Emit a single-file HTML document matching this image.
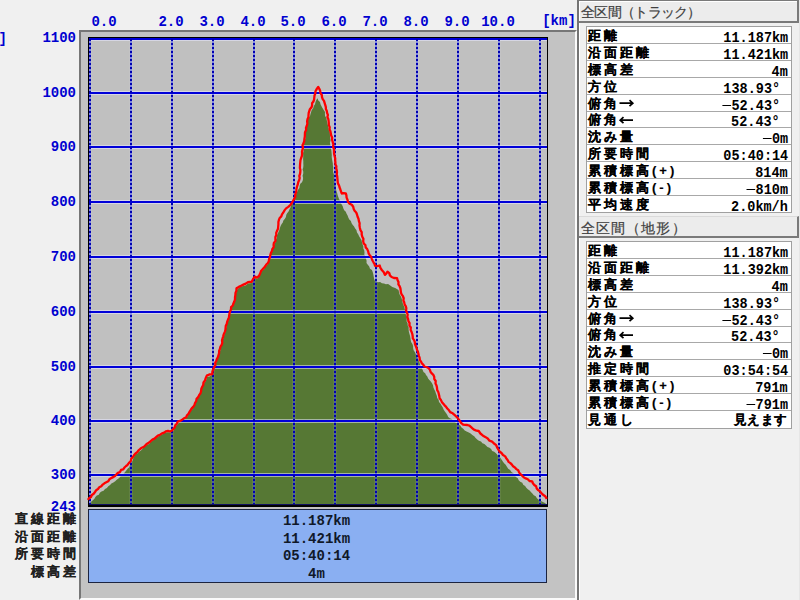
<!DOCTYPE html>
<html><head><meta charset="utf-8">
<style>
html,body{margin:0;padding:0;}
body{width:800px;height:600px;overflow:hidden;background:#f0f0f0;position:relative;font-family:"Liberation Mono",monospace;}
.abs{position:absolute;}
.yl{position:absolute;left:16px;width:60px;text-align:right;color:#0000d0;font:bold 14px/17px "Liberation Mono",monospace;}
.xl{position:absolute;top:14px;width:60px;text-align:center;color:#0000d0;font:bold 14px/17px "Liberation Mono",monospace;}
.panel{position:absolute;left:79px;top:30px;width:494px;height:566px;background:#c3c3c3;border-top:2px solid #767676;border-left:2px solid #767676;border-right:2px solid #fafafa;border-bottom:2px solid #fafafa;}
.info{position:absolute;left:88px;top:509px;width:457px;height:72px;background:#8aaff2;border:1px solid #1c2440;}
.iv{position:absolute;left:-1px;width:457px;text-align:center;color:#101828;font:bold 14px/17px "Liberation Mono",monospace;}
.ik{position:absolute;left:0;width:79px;text-align:right;color:#202020;font:bold 13px/17px "Liberation Sans",sans-serif;letter-spacing:3px;-webkit-text-stroke:0.15px #202020;}
.rline{position:absolute;left:577px;top:0;width:2px;height:600px;background:#747474;border-right:1px solid #fff;}
.hdr{position:absolute;left:579px;width:218px;height:19px;background:#ececec;border-top:1px solid #7a7a7a;border-right:2px solid #7a7a7a;border-bottom:2px solid #7a7a7a;box-shadow:inset 1px 1px 0 #fff;color:#404040;font:14px/20px "Liberation Sans",sans-serif;}
.hdr span{position:absolute;left:2px;top:1px;-webkit-text-stroke:0.2px #404040;white-space:nowrap;}
.tbl{position:absolute;left:586px;width:204px;background:#ffffff;border:1px solid #a0a0a0;}
.div{position:absolute;left:0;width:204px;height:1px;background:#a8a8a8;}
.k{position:absolute;left:1px;font:bold 13px/17px "Liberation Sans",sans-serif;color:#000;letter-spacing:3px;-webkit-text-stroke:0.15px #000;}
.v{position:absolute;right:3px;font:bold 14px/17px "Liberation Mono",monospace;color:#000;padding-top:3px;transform:scaleX(0.965);transform-origin:100% 50%;}
.ar{display:inline-block;width:15px;}
.v s{display:inline-block;width:8.4px;height:10px;position:relative;text-decoration:none;}
.v s::before{content:"";position:absolute;left:-1.5px;top:4.5px;width:9px;height:1.6px;background:#000;}
.v u{text-decoration:none;display:inline-block;font:bold 13px/17px "Liberation Sans",sans-serif;letter-spacing:1px;-webkit-text-stroke:0.15px #000;position:relative;top:-3px;}
.v i{font-style:normal;display:inline-block;width:17px;text-align:left;}
</style></head><body>
<div class="yl" style="left:-53px;top:31px;">[m]</div>
<div class="yl" style="top:30px">1100</div><div class="yl" style="top:85px">1000</div><div class="yl" style="top:139px">900</div><div class="yl" style="top:194px">800</div><div class="yl" style="top:249px">700</div><div class="yl" style="top:304px">600</div><div class="yl" style="top:359px">500</div><div class="yl" style="top:413px">400</div><div class="yl" style="top:467px">300</div><div class="yl" style="top:499px">243</div>
<div class="xl" style="left:74px;width:60px;">0.0</div>
<div class="xl" style="left:141px">2.0</div><div class="xl" style="left:182px">3.0</div><div class="xl" style="left:223px">4.0</div><div class="xl" style="left:263px">5.0</div><div class="xl" style="left:304px">6.0</div><div class="xl" style="left:345px">7.0</div><div class="xl" style="left:386px">8.0</div><div class="xl" style="left:427px">9.0</div><div class="xl" style="left:468px">10.0</div>
<div class="xl" style="left:529px;width:60px;top:13px">[km]</div>
<div class="panel"></div>
<svg class="abs" style="left:0;top:0" width="800" height="600" viewBox="0 0 800 600">
<rect x="88" y="37" width="460" height="470" fill="#000"/>
<rect x="89" y="38" width="458" height="467" fill="#c0c0c0"/>
<polygon points="87.9,503.8 90.0,503.0 91.3,501.5 92.9,500.2 94.4,498.8 95.4,497.0 96.8,495.5 98.8,494.7 99.8,492.8 101.5,491.5 103.6,490.7 105.0,489.0 106.9,487.9 108.3,486.3 110.1,485.1 111.4,483.4 113.4,482.4 115.2,481.3 116.7,479.7 118.5,478.5 120.1,477.1 121.3,475.1 123.4,474.0 124.9,472.3 126.3,470.5 127.6,468.8 129.3,467.2 130.0,465.0 131.2,463.1 132.4,461.1 133.2,458.6 134.3,456.3 135.5,454.5 137.4,453.4 138.8,451.8 140.7,450.7 142.2,449.3 143.5,447.3 145.3,446.0 147.1,444.7 149.3,443.9 150.7,442.1 152.6,440.8 154.1,439.2 156.0,438.0 157.9,436.7 159.9,435.5 162.0,434.5 164.0,433.3 166.0,432.4 168.0,432.2 170.0,432.4 172.3,432.2 173.6,430.5 174.5,428.5 175.3,426.4 177.1,425.0 178.2,423.4 180.2,422.1 182.0,420.6 184.1,419.4 185.8,417.8 187.4,416.5 188.3,414.6 189.2,412.7 190.2,410.9 192.0,409.6 193.3,408.0 193.6,405.8 195.3,404.1 195.9,402.0 196.7,399.8 197.8,397.9 199.2,396.1 200.3,394.1 200.3,391.8 201.6,390.0 201.8,387.8 203.2,386.1 203.8,383.7 205.3,381.7 206.4,379.4 207.0,377.0 209.7,376.5 211.8,374.9 212.3,372.6 213.6,370.5 213.8,368.1 214.7,365.9 215.5,364.0 216.4,362.0 216.5,359.9 217.1,357.9 218.5,356.1 218.6,353.9 219.8,352.1 220.4,350.1 220.5,347.9 221.1,345.8 221.8,343.7 222.5,341.6 223.0,339.5 223.6,337.3 224.2,335.3 225.1,333.2 225.3,331.0 225.8,328.9 226.6,326.9 226.6,324.7 227.2,322.6 228.4,320.7 228.5,318.5 229.0,316.5 229.0,314.3 229.9,312.3 230.9,310.3 231.1,308.1 232.5,306.3 233.3,304.3 233.5,302.1 234.8,300.3 235.1,298.2 235.7,296.1 235.8,293.9 236.5,291.9 236.8,289.9 238.8,287.9 241.1,286.6 243.6,286.1 246.0,285.2 248.0,283.5 250.0,283.3 252.1,283.0 253.2,280.3 254.8,277.6 257.1,278.9 258.5,276.7 260.0,274.6 261.1,272.2 262.6,270.6 264.2,269.2 265.0,267.1 266.8,265.7 267.7,263.9 268.1,261.9 268.8,260.0 270.2,258.3 270.5,256.2 271.0,254.2 271.9,252.2 272.8,250.3 272.9,248.1 273.7,246.1 274.4,244.1 275.5,242.2 275.7,240.1 276.8,238.2 276.8,236.0 277.6,234.0 278.5,232.1 279.3,230.2 279.9,228.1 280.6,226.1 281.5,224.2 282.8,222.5 283.4,220.4 284.9,218.8 285.9,216.9 286.3,214.7 287.3,212.9 288.7,211.3 289.5,209.3 290.5,207.5 291.0,205.4 291.8,203.4 292.8,201.6 294.1,199.8 294.5,197.7 295.5,195.7 296.4,193.8 297.2,191.8 298.1,189.8 299.4,188.1 299.6,185.8 300.3,183.7 302.0,182.2 302.9,180.0 303.1,177.9 302.6,175.8 303.2,173.8 303.3,171.7 302.6,169.6 303.2,167.5 303.4,165.4 303.3,163.4 303.3,161.3 303.1,159.2 303.2,157.1 303.2,155.0 303.1,152.9 303.7,150.9 303.5,148.8 304.1,146.7 303.6,144.6 304.8,142.6 304.8,140.5 305.4,138.4 305.6,136.3 305.9,134.3 305.9,132.1 305.6,130.0 306.6,128.0 306.3,125.8 306.7,123.8 307.4,121.8 308.0,119.8 308.7,117.8 310.0,116.0 310.5,113.9 311.1,111.9 311.8,109.9 313.2,108.2 313.8,106.1 315.0,104.3 315.5,102.1 316.3,100.1 317.5,98.3 318.3,100.4 320.0,102.0 320.5,104.3 321.5,106.3 322.6,108.2 323.7,110.1 325.0,111.9 324.9,114.0 325.1,116.1 326.4,117.9 326.7,119.9 327.2,121.9 327.5,124.0 328.1,126.0 328.5,128.0 328.7,130.0 329.7,132.0 329.9,134.1 330.0,136.2 330.3,138.3 330.6,140.4 329.9,142.6 330.2,144.7 331.2,146.7 331.0,148.8 331.4,150.8 331.6,152.9 331.8,155.0 331.7,157.1 332.0,159.2 332.4,161.3 332.8,163.3 332.9,165.4 333.3,167.5 333.1,169.6 333.1,171.7 333.7,173.7 334.2,175.8 334.3,177.9 334.3,180.0 334.6,182.2 334.9,184.3 335.7,186.4 335.8,188.6 336.4,190.7 337.1,192.8 337.6,194.9 338.3,196.9 339.0,198.9 340.1,200.7 340.6,202.7 341.7,204.5 342.7,206.3 343.3,208.3 344.2,210.2 345.8,211.7 346.6,213.7 347.6,215.5 348.3,217.6 349.3,219.4 350.9,221.0 351.5,223.0 352.6,224.8 354.1,226.4 355.0,228.3 356.4,230.1 357.0,232.4 358.2,234.2 359.1,236.3 360.3,238.2 361.5,240.0 361.9,242.1 362.5,244.2 363.3,246.2 363.3,248.4 364.2,250.3 364.5,252.5 364.3,254.7 365.4,256.6 366.0,258.7 366.6,260.7 366.5,263.0 367.8,264.8 369.2,266.5 370.0,268.7 371.9,270.0 372.7,272.1 373.3,274.3 373.7,276.6 374.1,278.8 375.0,281.1 377.9,282.3 380.1,282.1 381.9,283.3 384.0,283.5 385.9,284.2 388.1,284.1 389.9,285.2 392.3,287.0 395.2,287.9 398.5,289.9 399.0,292.1 399.5,294.3 400.8,296.2 401.6,298.2 402.2,300.4 402.6,302.6 403.2,304.7 404.3,306.7 404.7,308.8 405.1,310.8 405.6,312.9 405.9,315.0 406.7,317.0 406.7,319.2 406.6,321.4 407.6,323.3 407.7,325.5 408.7,327.4 408.6,329.6 408.9,331.7 409.4,333.8 410.0,335.8 410.4,337.9 410.7,340.0 411.1,342.1 412.4,343.9 413.1,345.9 413.1,348.1 413.6,350.2 414.8,352.0 415.8,354.0 416.4,356.2 417.7,358.0 418.5,360.1 419.4,362.1 419.9,364.3 421.0,366.2 421.9,368.2 422.7,370.1 423.5,371.9 425.2,373.2 426.0,375.1 427.3,376.6 428.1,378.5 429.4,380.0 430.8,381.5 432.0,383.2 433.0,385.2 433.4,387.5 434.3,389.5 435.3,391.5 436.0,393.7 436.8,395.8 437.2,398.0 438.6,399.8 439.0,402.1 440.5,403.7 441.5,405.6 442.8,407.4 443.6,409.4 444.7,411.3 446.0,413.0 447.2,414.8 448.2,416.9 449.8,418.2 451.7,419.1 453.2,420.6 454.7,422.1 456.7,423.1 458.5,424.3 460.2,425.6 461.5,427.4 463.2,428.8 464.7,430.4 466.6,431.6 468.8,432.4 470.6,433.6 472.3,435.0 474.2,436.2 475.6,437.9 477.2,439.4 478.9,440.7 481.0,441.4 482.4,443.2 484.4,444.1 486.0,445.4 487.5,447.0 489.5,447.7 491.1,449.0 492.2,450.9 494.2,451.8 495.7,453.1 497.2,454.5 498.5,456.4 500.4,457.7 501.5,459.6 502.8,461.5 504.1,463.2 505.7,464.8 506.9,466.8 508.2,468.7 510.1,470.1 511.5,471.9 513.3,473.3 514.7,475.1 515.9,477.1 517.8,478.2 518.7,480.3 520.2,481.8 522.3,482.7 523.2,484.8 525.1,485.9 526.3,487.7 527.8,489.2 529.6,490.4 530.9,492.1 532.4,493.6 533.8,495.2 535.7,496.3 536.9,498.2 538.7,499.7 540.8,500.8 542.8,502.1 545.0,503.1 546.8,504.8 547.0,505.0 88.0,505.0" fill="#567834"/>
<rect x="89" y="37" width="458" height="4" fill="#e8e8ff" opacity="0.55"/><rect x="89" y="91" width="458" height="4" fill="#e8e8ff" opacity="0.55"/><rect x="89" y="145" width="458" height="4" fill="#e8e8ff" opacity="0.55"/><rect x="89" y="200" width="458" height="4" fill="#e8e8ff" opacity="0.55"/><rect x="89" y="255" width="458" height="4" fill="#e8e8ff" opacity="0.55"/><rect x="89" y="310" width="458" height="4" fill="#e8e8ff" opacity="0.55"/><rect x="89" y="365" width="458" height="4" fill="#e8e8ff" opacity="0.55"/><rect x="89" y="419" width="458" height="4" fill="#e8e8ff" opacity="0.55"/><rect x="89" y="473" width="458" height="4" fill="#e8e8ff" opacity="0.55"/><rect x="88" y="38" width="4" height="467" fill="#e8e8ff" opacity="0.08"/><rect x="129" y="38" width="4" height="467" fill="#e8e8ff" opacity="0.08"/><rect x="170" y="38" width="4" height="467" fill="#e8e8ff" opacity="0.08"/><rect x="211" y="38" width="4" height="467" fill="#e8e8ff" opacity="0.08"/><rect x="252" y="38" width="4" height="467" fill="#e8e8ff" opacity="0.08"/><rect x="292" y="38" width="4" height="467" fill="#e8e8ff" opacity="0.08"/><rect x="333" y="38" width="4" height="467" fill="#e8e8ff" opacity="0.08"/><rect x="374" y="38" width="4" height="467" fill="#e8e8ff" opacity="0.08"/><rect x="415" y="38" width="4" height="467" fill="#e8e8ff" opacity="0.08"/><rect x="456" y="38" width="4" height="467" fill="#e8e8ff" opacity="0.08"/><rect x="497" y="38" width="4" height="467" fill="#e8e8ff" opacity="0.08"/><rect x="538" y="38" width="4" height="467" fill="#e8e8ff" opacity="0.08"/><rect x="89" y="38" width="2" height="467" fill="#3040ff" opacity="0.45"/><rect x="130" y="38" width="2" height="467" fill="#3040ff" opacity="0.45"/><rect x="171" y="38" width="2" height="467" fill="#3040ff" opacity="0.45"/><rect x="212" y="38" width="2" height="467" fill="#3040ff" opacity="0.45"/><rect x="253" y="38" width="2" height="467" fill="#3040ff" opacity="0.45"/><rect x="293" y="38" width="2" height="467" fill="#3040ff" opacity="0.45"/><rect x="334" y="38" width="2" height="467" fill="#3040ff" opacity="0.45"/><rect x="375" y="38" width="2" height="467" fill="#3040ff" opacity="0.45"/><rect x="416" y="38" width="2" height="467" fill="#3040ff" opacity="0.45"/><rect x="457" y="38" width="2" height="467" fill="#3040ff" opacity="0.45"/><rect x="498" y="38" width="2" height="467" fill="#3040ff" opacity="0.45"/><rect x="539" y="38" width="2" height="467" fill="#3040ff" opacity="0.45"/><rect x="89" y="38" width="458" height="2" fill="#0000d8"/><rect x="89" y="92" width="458" height="2" fill="#0000d8"/><rect x="89" y="146" width="458" height="2" fill="#0000d8"/><rect x="89" y="201" width="458" height="2" fill="#0000d8"/><rect x="89" y="256" width="458" height="2" fill="#0000d8"/><rect x="89" y="311" width="458" height="2" fill="#0000d8"/><rect x="89" y="366" width="458" height="2" fill="#0000d8"/><rect x="89" y="420" width="458" height="2" fill="#0000d8"/><rect x="89" y="474" width="458" height="2" fill="#0000d8"/><line x1="90" y1="38" x2="90" y2="505" stroke="#0000b0" stroke-width="2" stroke-dasharray="2 2" stroke-dashoffset="3"/><line x1="131" y1="38" x2="131" y2="505" stroke="#0000b0" stroke-width="2" stroke-dasharray="2 2" stroke-dashoffset="3"/><line x1="172" y1="38" x2="172" y2="505" stroke="#0000b0" stroke-width="2" stroke-dasharray="2 2" stroke-dashoffset="3"/><line x1="213" y1="38" x2="213" y2="505" stroke="#0000b0" stroke-width="2" stroke-dasharray="2 2" stroke-dashoffset="3"/><line x1="254" y1="38" x2="254" y2="505" stroke="#0000b0" stroke-width="2" stroke-dasharray="2 2" stroke-dashoffset="3"/><line x1="294" y1="38" x2="294" y2="505" stroke="#0000b0" stroke-width="2" stroke-dasharray="2 2" stroke-dashoffset="3"/><line x1="335" y1="38" x2="335" y2="505" stroke="#0000b0" stroke-width="2" stroke-dasharray="2 2" stroke-dashoffset="3"/><line x1="376" y1="38" x2="376" y2="505" stroke="#0000b0" stroke-width="2" stroke-dasharray="2 2" stroke-dashoffset="3"/><line x1="417" y1="38" x2="417" y2="505" stroke="#0000b0" stroke-width="2" stroke-dasharray="2 2" stroke-dashoffset="3"/><line x1="458" y1="38" x2="458" y2="505" stroke="#0000b0" stroke-width="2" stroke-dasharray="2 2" stroke-dashoffset="3"/><line x1="499" y1="38" x2="499" y2="505" stroke="#0000b0" stroke-width="2" stroke-dasharray="2 2" stroke-dashoffset="3"/><line x1="540" y1="38" x2="540" y2="505" stroke="#0000b0" stroke-width="2" stroke-dasharray="2 2" stroke-dashoffset="3"/>
<rect x="89" y="504" width="458" height="1" fill="#101060"/>
<rect x="88" y="37" width="460" height="1" fill="#000"/><rect x="88" y="37" width="1" height="470" fill="#000"/><rect x="547" y="37" width="1" height="470" fill="#000"/><rect x="88" y="505" width="460" height="2" fill="#000"/>
<polyline points="87.9,499.9 89.1,498.2 91.0,497.0 91.9,495.0 93.7,493.7 95.0,492.0 96.2,490.2 98.0,489.0 99.3,487.3 101.3,486.3 102.7,484.6 104.4,483.3 106.3,482.3 108.2,481.3 109.4,479.3 111.1,478.1 113.1,477.1 115.0,476.1 116.4,474.4 117.9,472.9 120.0,472.1 121.0,469.9 123.2,469.3 124.5,467.5 126.1,466.0 127.6,464.8 129.0,462.9 130.7,461.2 131.3,458.8 132.9,457.0 134.1,455.1 135.5,453.5 137.2,452.2 138.5,450.4 140.1,449.0 141.8,447.7 143.9,446.8 145.5,445.2 147.1,443.7 149.1,442.6 150.7,441.1 152.4,439.6 154.5,438.6 156.1,437.2 157.9,435.6 160.0,434.7 162.0,433.4 164.2,432.6 166.0,431.3 168.0,430.8 170.0,431.5 171.7,430.8 173.1,429.2 174.6,427.6 175.3,425.4 176.8,423.8 177.7,421.6 180.1,420.9 182.2,419.7 184.0,418.3 186.3,417.2 187.0,415.2 188.5,413.7 189.5,411.9 190.6,410.2 191.7,408.4 193.2,406.9 194.4,405.2 195.0,403.0 196.2,401.1 196.6,398.8 198.2,397.1 199.1,395.1 200.5,393.2 201.1,391.1 201.3,388.9 202.1,387.0 203.2,385.1 203.5,382.5 205.0,380.5 205.7,378.1 206.8,375.6 209.3,374.5 212.3,374.1 212.4,371.6 213.2,369.4 214.1,367.2 215.4,365.1 215.2,362.9 216.2,361.0 216.9,359.0 217.9,357.1 218.5,355.1 219.1,353.1 219.1,350.9 219.9,349.0 220.4,346.8 221.6,344.9 222.3,342.8 222.0,340.5 222.6,338.3 223.2,336.3 223.8,334.1 224.7,332.1 225.4,330.0 225.6,327.9 225.8,325.7 226.8,323.7 227.2,321.7 228.0,319.6 228.9,317.7 229.2,315.5 229.5,313.4 230.1,311.3 231.0,309.4 231.1,307.1 232.8,305.5 233.4,303.4 234.3,301.5 235.0,299.4 235.0,297.2 235.4,295.0 235.5,292.9 236.4,290.8 236.5,288.3 238.8,286.9 241.2,285.7 243.4,284.6 245.7,283.6 247.9,282.2 249.9,281.8 251.7,281.8 253.0,279.2 254.8,276.6 256.9,277.7 259.0,276.0 260.1,273.6 261.0,271.1 262.4,269.5 263.9,267.9 265.2,266.3 266.3,264.5 267.9,263.0 268.8,261.2 269.1,259.0 269.9,257.2 270.3,255.2 270.9,253.1 271.9,251.1 272.4,249.0 273.7,247.2 273.6,244.9 273.9,242.9 275.4,241.1 275.4,239.0 275.4,236.9 276.3,235.0 276.2,232.9 277.1,230.8 278.0,228.8 278.2,226.6 278.4,224.4 278.4,222.1 278.9,219.9 279.7,218.0 281.3,216.4 282.0,214.4 283.2,212.7 284.5,210.4 286.1,208.4 288.3,206.9 290.3,205.0 292.0,202.7 293.1,200.7 294.2,198.8 295.3,196.8 295.2,194.6 296.0,192.7 296.3,190.7 296.5,188.6 297.0,186.6 297.8,184.4 298.2,182.2 299.2,180.0 299.7,178.0 299.3,176.0 300.0,174.0 300.3,172.0 300.4,170.0 299.9,168.0 300.0,166.0 300.1,164.0 300.3,162.0 300.5,160.0 301.2,157.9 301.9,155.9 302.1,153.8 302.0,151.6 302.5,149.6 303.0,147.5 302.5,145.3 303.5,143.3 304.2,141.2 304.4,138.9 304.8,136.7 304.9,134.4 305.0,132.2 306.1,130.1 306.0,127.8 306.8,125.8 307.4,123.7 307.1,121.4 307.5,119.3 308.4,117.2 308.5,115.1 308.7,112.9 309.3,111.0 310.0,109.0 311.5,107.4 312.1,105.4 312.1,103.2 313.4,101.5 314.1,99.6 314.3,97.5 314.5,95.5 315.3,93.6 315.4,91.5 316.8,88.9 318.2,86.9 319.3,88.8 320.2,90.9 320.5,93.1 321.8,95.0 322.0,97.1 322.7,99.1 324.0,100.9 324.6,102.9 325.2,104.9 325.8,106.9 325.9,109.0 326.8,110.9 327.1,113.0 327.9,114.9 327.4,117.1 328.3,119.0 328.6,121.0 328.8,123.0 328.8,125.1 329.7,127.1 329.5,129.2 330.4,131.2 330.8,133.3 331.2,135.5 332.2,137.7 332.1,140.0 332.8,142.2 333.4,144.4 333.0,146.7 334.0,149.0 334.0,151.3 334.1,153.7 334.6,156.0 335.2,158.3 335.2,160.3 335.4,162.3 335.4,164.3 336.4,166.2 336.2,168.3 336.8,170.3 337.0,172.3 336.7,174.3 337.2,176.3 337.4,178.3 337.6,180.8 337.9,183.4 339.0,185.3 339.5,187.3 340.3,189.3 341.0,191.3 341.7,193.5 343.8,193.2 345.8,193.3 346.4,195.4 346.6,197.6 347.5,199.7 348.0,202.0 349.6,203.7 351.8,204.8 353.2,206.7 353.7,208.9 354.6,210.8 356.2,212.5 357.0,214.5 357.6,216.7 358.5,218.8 358.9,221.1 359.6,223.2 359.5,225.6 359.9,227.9 360.4,230.1 361.7,232.1 361.7,234.5 362.3,236.7 363.4,238.8 363.2,241.2 363.7,243.5 365.4,245.1 365.7,247.4 367.2,249.1 368.1,251.1 368.6,253.3 369.7,255.2 371.2,256.7 371.7,258.6 372.5,260.5 373.5,262.3 374.5,264.0 375.0,265.8 377.1,266.1 379.7,265.5 380.4,267.9 381.8,270.0 383.8,272.2 384.9,274.9 386.4,273.4 387.5,271.7 389.3,273.1 389.9,275.4 391.6,277.0 394.0,278.0 397.1,278.2 397.6,280.2 398.5,282.1 398.4,284.4 399.6,286.2 400.4,288.2 400.7,290.3 400.9,292.4 401.6,294.4 402.9,296.2 403.7,298.2 403.4,300.4 404.2,302.3 404.6,304.4 405.7,306.2 406.3,308.2 406.1,310.5 406.9,312.6 407.7,314.6 407.3,317.0 408.1,319.0 408.4,321.2 409.6,323.2 409.4,325.5 410.8,327.5 410.6,329.8 411.6,331.9 412.3,334.0 412.7,336.2 412.8,338.4 414.1,340.2 414.8,342.1 415.0,344.2 415.8,346.0 416.5,347.9 417.1,349.9 417.9,351.8 418.4,353.8 418.9,355.8 419.6,357.7 419.8,359.8 421.0,361.6 421.9,363.4 423.4,364.8 424.3,366.5 426.4,367.0 428.5,368.1 429.9,369.7 430.5,371.8 431.8,373.4 433.3,374.8 434.2,376.7 434.3,379.0 435.7,381.0 435.5,383.4 436.5,385.5 437.0,387.8 437.2,390.1 438.3,392.0 438.8,394.0 439.3,396.1 439.6,398.2 440.9,399.9 441.8,401.9 443.1,403.5 444.4,405.1 445.9,406.6 447.3,408.5 449.0,410.3 450.2,412.1 452.7,413.3 454.8,415.2 456.6,416.8 458.1,418.6 459.5,420.4 461.0,422.8 463.2,424.6 465.2,424.9 467.3,425.0 469.4,425.6 471.1,427.1 472.8,428.8 474.6,429.9 476.5,430.7 478.7,431.0 480.4,433.5 482.7,435.4 485.2,436.9 487.7,438.5 489.5,440.7 492.1,441.6 494.0,443.5 496.2,445.2 497.1,447.4 498.3,449.5 499.5,451.5 501.5,453.0 503.0,455.0 505.2,456.4 506.2,458.3 507.6,460.0 508.6,461.9 510.4,463.1 511.9,464.6 513.1,466.3 514.9,467.5 516.4,469.1 518.2,470.3 519.1,472.3 520.4,474.1 522.1,475.7 523.7,477.3 525.8,478.4 527.8,479.3 529.5,481.0 532.1,481.3 532.9,483.3 534.3,485.0 536.1,486.3 536.7,488.5 538.2,490.1 539.9,491.3 541.3,492.9 542.7,494.5 545.2,496.2 546.8,498.8" fill="none" stroke="#ff0000" stroke-width="2.3" stroke-linejoin="round"/>
</svg>
<div class="info">
<div class="iv" style="top:3px">11.187km</div>
<div class="iv" style="top:20.5px">11.421km</div>
<div class="iv" style="top:38px">05:40:14</div>
<div class="iv" style="top:55.5px">4m</div>
</div>
<div class="ik" style="top:510px">直線距離</div>
<div class="ik" style="top:528px">沿面距離</div>
<div class="ik" style="top:545px">所要時間</div>
<div class="ik" style="top:563px">標高差</div>
<div class="rline"></div>
<div class="hdr" style="top:0px;height:20px"><span style="letter-spacing:-0.7px">全区間（トラック）</span></div>
<div class="tbl" style="top:26px;height:185px">
<div class="k" style="top:0px">距離</div><div class="v" style="top:0px">11.187km</div>
<div class="div" style="top:16px"></div>
<div class="k" style="top:17px">沿面距離</div><div class="v" style="top:17px">11.421km</div>
<div class="div" style="top:33px"></div>
<div class="k" style="top:34px">標高差</div><div class="v" style="top:34px">4m</div>
<div class="div" style="top:50px"></div>
<div class="k" style="top:51px">方位</div><div class="v" style="top:51px">138.93<i>°</i></div>
<div class="div" style="top:67px"></div>
<div class="k" style="top:68px">俯角<b class=ar></b></div><div class="v" style="top:68px"><s></s>52.43<i>°</i></div>
<div class="div" style="top:84px"></div>
<div class="k" style="top:84px">俯角<b class=ar></b></div><div class="v" style="top:84px">52.43<i>°</i></div>
<div class="div" style="top:100px"></div>
<div class="k" style="top:101px">沈み量</div><div class="v" style="top:101px"><s></s>0m</div>
<div class="div" style="top:117px"></div>
<div class="k" style="top:118px">所要時間</div><div class="v" style="top:118px">05:40:14</div>
<div class="div" style="top:134px"></div>
<div class="k" style="top:135px">累積標高(+)</div><div class="v" style="top:135px">814m</div>
<div class="div" style="top:151px"></div>
<div class="k" style="top:152px">累積標高(-)</div><div class="v" style="top:152px"><s></s>810m</div>
<div class="div" style="top:168px"></div>
<div class="k" style="top:169px">平均速度</div><div class="v" style="top:169px">2.0km/h</div>
</div>
<div class="hdr" style="top:216px;border-top-color:#dadada;box-shadow:none"><span style="letter-spacing:1.1px">全区間（地形）</span></div>
<div class="tbl" style="top:241px;height:186px">
<div class="k" style="top:0px">距離</div><div class="v" style="top:0px">11.187km</div>
<div class="div" style="top:16px"></div>
<div class="k" style="top:17px">沿面距離</div><div class="v" style="top:17px">11.392km</div>
<div class="div" style="top:33px"></div>
<div class="k" style="top:34px">標高差</div><div class="v" style="top:34px">4m</div>
<div class="div" style="top:50px"></div>
<div class="k" style="top:51px">方位</div><div class="v" style="top:51px">138.93<i>°</i></div>
<div class="div" style="top:67px"></div>
<div class="k" style="top:68px">俯角<b class=ar></b></div><div class="v" style="top:68px"><s></s>52.43<i>°</i></div>
<div class="div" style="top:84px"></div>
<div class="k" style="top:84px">俯角<b class=ar></b></div><div class="v" style="top:84px">52.43<i>°</i></div>
<div class="div" style="top:100px"></div>
<div class="k" style="top:101px">沈み量</div><div class="v" style="top:101px"><s></s>0m</div>
<div class="div" style="top:117px"></div>
<div class="k" style="top:118px">推定時間</div><div class="v" style="top:118px">03:54:54</div>
<div class="div" style="top:134px"></div>
<div class="k" style="top:135px">累積標高(+)</div><div class="v" style="top:135px">791m</div>
<div class="div" style="top:151px"></div>
<div class="k" style="top:152px">累積標高(-)</div><div class="v" style="top:152px"><s></s>791m</div>
<div class="div" style="top:168px"></div>
<div class="k" style="top:169px">見通し</div><div class="v" style="top:169px"><u>見えます</u></div>
</div>
<div class="abs" style="left:799px;top:0;width:1px;height:600px;background:#e6e6e6"></div>
<svg class="abs" style="left:0;top:0" width="800" height="600" viewBox="0 0 800 600">
<g fill="none" stroke="#000" stroke-width="1.7" stroke-linecap="butt" stroke-linejoin="miter">
<path d="M619.5 103.2H632.5M629.5 100.2L632.8 103.2L629.5 106.2"/>
<path d="M620.5 120.2H633M623.5 117.2L620.2 120.2L623.5 123.2"/>
<path d="M619.5 318.2H632.5M629.5 315.2L632.8 318.2L629.5 321.2"/>
<path d="M620.5 335.2H633M623.5 332.2L620.2 335.2L623.5 338.2"/>
</g></svg>
</body></html>
